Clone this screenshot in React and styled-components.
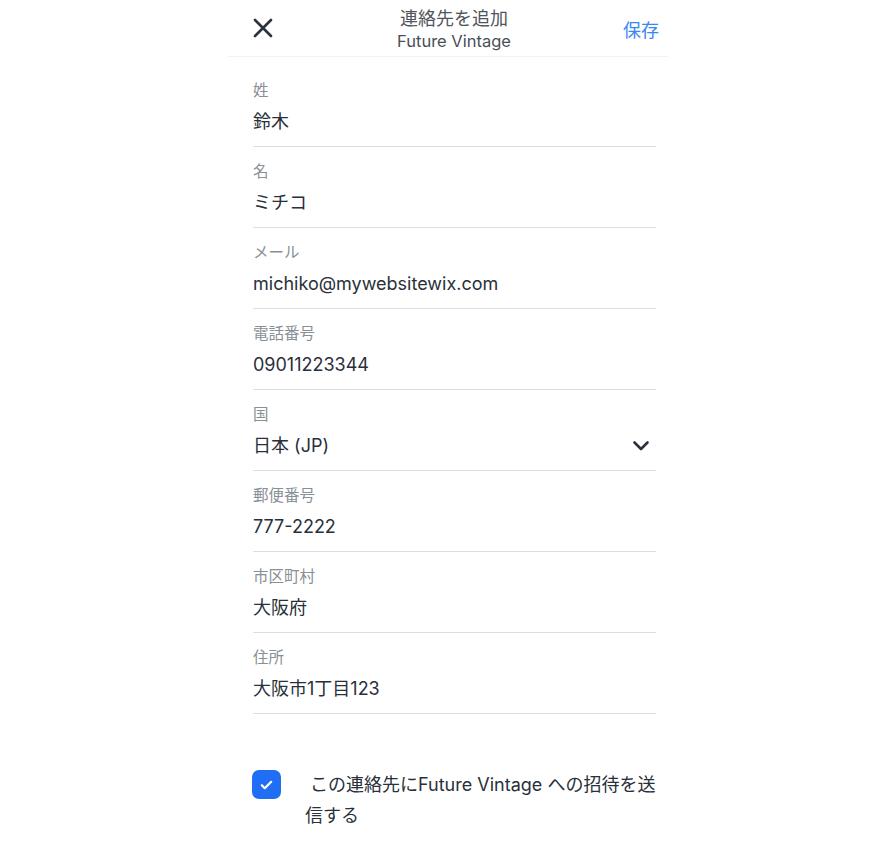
import React from "react";
import styled, { createGlobalStyle } from "styled-components";

const Global = createGlobalStyle`
  html, body { margin: 0; padding: 0; background: #ffffff; }
  body { font-family: "Inter", "Noto Sans CJK JP", sans-serif; -webkit-font-smoothing: antialiased; }
`;

const Page = styled.div`
  width: 452px;
  margin-left: 228px;
  min-height: 852px;
  background: #fff;
`;

const HeaderWrap = styled.div`
  margin-right: 12px;
  border-bottom: 1px solid #f1f2f3;
`;

const Header = styled.div`
  display: grid;
  grid-template-columns: 70px 1fr 70px;
  align-items: center;
  height: 56px;
  margin-right: -12px;
`;

const CloseBtn = styled.button`
  display: flex;
  align-items: center;
  justify-content: flex-start;
  padding: 0 0 0 25px;
  margin: 0;
  border: 0;
  background: none;
  color: #2a323c;
  cursor: pointer;
  height: 100%;
`;

const TitleBlock = styled.div`
  display: flex;
  flex-direction: column;
  align-items: center;
  line-height: 23px;
  color: #50555b;
  padding-top: 4px;
`;

const Title = styled.div`
  font-size: 18px;
`;

const Subtitle = styled.div`
  font-size: 16.5px;
  color: #4a4f55;
`;

const SaveBtn = styled.button`
  justify-self: end;
  margin: 2px 21px 0 0;
  padding: 0;
  border: 0;
  background: none;
  font-family: inherit;
  font-size: 18px;
  color: #3a87f4;
  cursor: pointer;
`;

const Form = styled.div`
  padding: 9px 24px 0 25px;
`;

const Field = styled.div`
  padding: 15px 0 12px;
  border-bottom: 1px solid #dcdfe2;
`;

const Label = styled.div`
  font-size: 15.5px;
  line-height: 20px;
  color: #8a8f95;
  margin-bottom: 9px;
`;

const ValueRow = styled.div`
  display: flex;
  align-items: center;
  justify-content: space-between;
  height: 24px;
`;

const Value = styled.div`
  font-size: 18px;
  line-height: 24px;
  color: #29303a;
`;

const Chevron = styled.svg`
  margin-right: 6px;
  color: #2a323c;
`;

const InviteRow = styled.label`
  display: flex;
  align-items: flex-start;
  gap: 24px;
  margin-top: 55px;
  margin-left: -1px;
  padding-bottom: 20px;
  cursor: pointer;
`;

const CheckBox = styled.span`
  flex: none;
  width: 29px;
  height: 29px;
  margin-top: 1px;
  border-radius: 7px;
  background: ${(p) => (p.checked ? "#1f6ef4" : "#fff")};
  border: ${(p) => (p.checked ? "none" : "2px solid #c4c8cc")};
  display: flex;
  align-items: center;
  justify-content: center;
`;

const InviteText = styled.span`
  font-size: 18px;
  line-height: 31px;
  color: #29303a;
  white-space: pre-wrap;
`;

const fields = [
  { label: "姓", value: "鈴木" },
  { label: "名", value: "ミチコ" },
  { label: "メール", value: "michiko@mywebsitewix.com" },
  { label: "電話番号", value: "09011223344" },
  { label: "国", value: "日本 (JP)", select: true },
  { label: "郵便番号", value: "777-2222" },
  { label: "市区町村", value: "大阪府" },
  { label: "住所", value: "大阪市1丁目123" },
];

export default function App() {
  return (
    <>
      <Global />
      <Page>
        <HeaderWrap>
          <Header>
            <CloseBtn aria-label="close">
              <svg width="20" height="20" viewBox="0 0 20 20" fill="none">
                <path d="M2 2 L18 18 M18 2 L2 18" stroke="currentColor" strokeWidth="2.6" strokeLinecap="round" />
              </svg>
            </CloseBtn>
            <TitleBlock>
              <Title>連絡先を追加</Title>
              <Subtitle>Future Vintage</Subtitle>
            </TitleBlock>
            <SaveBtn>保存</SaveBtn>
          </Header>
        </HeaderWrap>
        <Form>
          {fields.map((f) => (
            <Field key={f.label}>
              <Label>{f.label}</Label>
              <ValueRow>
                <Value>{f.value}</Value>
                {f.select && (
                  <Chevron width="18" height="12" viewBox="0 0 18 12" fill="none">
                    <path d="M2.5 2.5 L9 9 L15.5 2.5" stroke="currentColor" strokeWidth="2.6" strokeLinecap="round" strokeLinejoin="round" />
                  </Chevron>
                )}
              </ValueRow>
            </Field>
          ))}
          <InviteRow>
            <CheckBox checked>
              <svg width="13" height="10" viewBox="0 0 13 10" fill="none">
                <path d="M1.8 5.2 L4.8 8.2 L11.2 1.8" stroke="#fff" strokeWidth="2.2" strokeLinecap="round" strokeLinejoin="round" />
              </svg>
            </CheckBox>
            <InviteText>{" この連絡先にFuture Vintage への招待を送信する"}</InviteText>
          </InviteRow>
        </Form>
      </Page>
    </>
  );
}
